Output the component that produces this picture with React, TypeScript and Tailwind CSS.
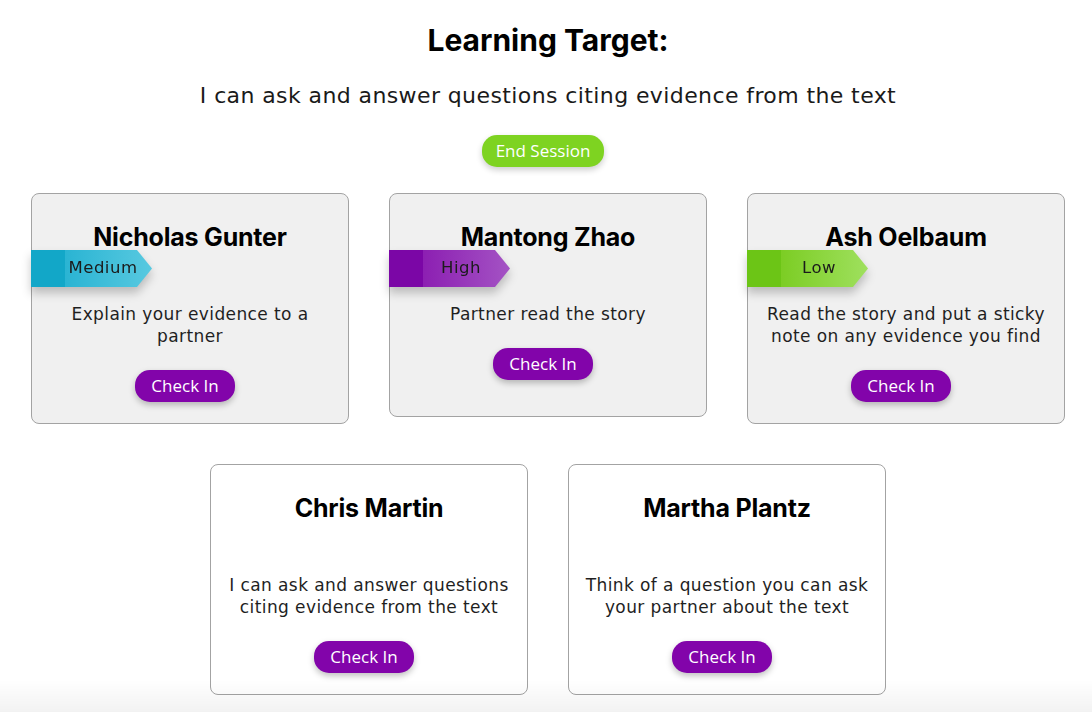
const heading = "font-['Inter','Lato',sans-serif]";
const body = "font-['DejaVu_Sans','Open_Sans',sans-serif]";
const btn = "font-['Open_Sans','Noto_Sans',sans-serif]";

type Level = "Medium" | "High" | "Low";

const ribbonBg: Record<Level, string> = {
  Medium: "bg-[linear-gradient(90deg,#12a7c8_0,#12a7c8_34px,#2ab4d3_34px,#58c9e0_100%)]",
  High: "bg-[linear-gradient(90deg,#7b06a6_0,#7b06a6_34px,#8c1fb2_34px,#a453c4_100%)]",
  Low: "bg-[linear-gradient(90deg,#6cc516_0,#6cc516_34px,#7ccd24_34px,#9fe05e_100%)]",
};

function Ribbon({ level }: { level: Level }) {
  return (
    <div className="self-start -ml-px drop-shadow-[0_6px_5px_rgba(0,0,0,0.22)]">
      <div
        className={`flex h-[37px] w-[121px] items-center [clip-path:polygon(0_0,106px_0,121px_50%,106px_100%,0_100%)] ${ribbonBg[level]}`}
      >
        <span className={`w-[110px] pl-[34px] text-center text-[16.5px] tracking-[0.5px] text-[#1b1b1b] ${body}`}>
          {level}
        </span>
      </div>
    </div>
  );
}

function CheckIn() {
  return (
    <button
      className={`h-8 w-[100px] rounded-[15px] bg-[#8204aa] text-[17px] font-medium text-white shadow-[0_3px_6px_rgba(0,0,0,0.25)] ${btn}`}
    >
      Check In
    </button>
  );
}

type Student = { name: string; task: string; level?: Level; shaded?: boolean; h?: string };

const row1: Student[] = [
  { name: "Nicholas Gunter", task: "Explain your evidence to a partner", level: "Medium", shaded: true },
  { name: "Mantong Zhao", task: "Partner read the story", level: "High", shaded: true, h: "h-[224px]" },
  { name: "Ash Oelbaum", task: "Read the story and put a sticky note on any evidence you find", level: "Low", shaded: true },
];

const row2: Student[] = [
  { name: "Chris Martin", task: "I can ask and answer questions citing evidence from the text" },
  { name: "Martha Plantz", task: "Think of a question you can ask your partner about the text" },
];

function Card({ s }: { s: Student }) {
  return (
    <div
      className={`flex w-[318px] flex-col items-center rounded-lg border border-[#a3a3a3] pt-[30px] ${s.h ?? ""} ${
        s.shaded ? "bg-[#f0f0f0]" : "bg-white"
      }`}
    >
      <h2 className={`text-[25px] font-bold leading-[26px] tracking-[-0.2px] text-black ${heading}`}>{s.name}</h2>
      {s.level ? <Ribbon level={s.level} /> : <div className="h-[37px]" />}
      <p className={`mt-[16px] px-3 text-center text-[17px] leading-[22px] tracking-[0.4px] text-[#1f1f1f] ${body}`}>
        {s.task}
      </p>
      <div className="mt-[23px] mb-[21px] mr-[10px]">
        <CheckIn />
      </div>
    </div>
  );
}

export default function App() {
  return (
    <div className="relative min-h-screen bg-white pt-[22px]">
      <div className="flex flex-col items-center pl-[4px]">
        <h1 className={`text-[30px] font-bold leading-9 text-black ${heading}`}>Learning Target:</h1>
        <p className={`mt-[23px] text-[22px] leading-[30px] tracking-[0.4px] text-[#1a1a1a] ${body}`}>
          I can ask and answer questions citing evidence from the text
        </p>
        <button
          className={`mt-[24px] mr-[10px] h-8 w-[122px] rounded-[15px] bg-[#7ed321] text-[17px] font-medium text-white shadow-[0_3px_6px_rgba(0,0,0,0.2)] ${btn}`}
        >
          End Session
        </button>
      </div>
      <div className="mt-[26px] flex items-start justify-center gap-[40px] pl-[4px]">
        {row1.map((s) => (
          <Card key={s.name} s={s} />
        ))}
      </div>
      <div className="mt-[40px] flex items-start justify-center gap-[40px] pb-10 pl-[4px]">
        {row2.map((s) => (
          <Card key={s.name} s={s} />
        ))}
      </div>
      <div className="pointer-events-none fixed inset-x-0 bottom-0 h-8 bg-gradient-to-b from-transparent to-black/5" />
    </div>
  );
}
